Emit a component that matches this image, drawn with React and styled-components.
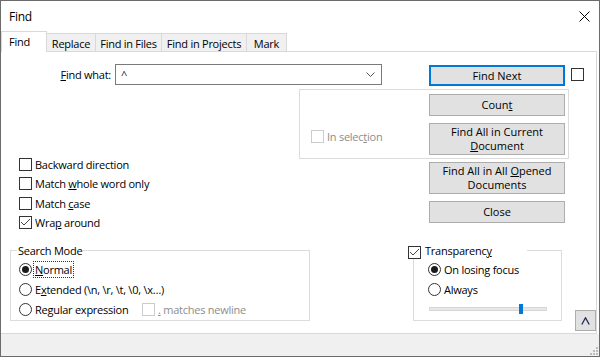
import React from 'react'
import styled, { createGlobalStyle } from 'styled-components'

const FONT = `"Open Sans", "Noto Sans", "Liberation Sans", sans-serif`

const GlobalStyle = createGlobalStyle`
  html, body { margin: 0; padding: 0; background: #ffffff; }
  body { font-family: ${FONT}; font-size: 11px; letter-spacing: -0.25px; color: #000; }
  * { box-sizing: border-box; }
`

const Window = styled.div`
  width: 600px;
  height: 357px;
  border: 1px solid #6b6b6b;
  background: #ffffff;
  display: flex;
  flex-direction: column;
  overflow: hidden;
`
const TitleBar = styled.div`
  height: 30px;
  flex: none;
  display: flex;
  align-items: center;
  justify-content: space-between;
  padding: 1px 9px 0 8px;
  font-size: 12px;
`
const TabStrip = styled.div`
  height: 20px;
  flex: none;
  display: flex;
  align-items: flex-end;
`
const Tab = styled.div`
  position: relative;
  z-index: ${p => (p.$active ? 1 : 0)};
  width: ${p => p.$w}px;
  height: ${p => (p.$active ? 21 : 18)}px;
  margin-bottom: ${p => (p.$active ? -1 : 0)}px;
  background: ${p => (p.$active ? '#ffffff' : '#f0f0f0')};
  border-top: 1px solid #d9d9d9;
  border-right: 1px solid #d9d9d9;
  border-left: ${p => (p.$active ? '1px solid #d9d9d9' : 'none')};
  display: flex;
  align-items: center;
  justify-content: ${p => (p.$active ? 'flex-start' : 'center')};
  padding: ${p => (p.$active ? '0 0 2px 7px' : '1px 0 0 0')};
  white-space: nowrap;
`
const Panel = styled.div`
  height: 283px;
  flex: none;
  margin-right: 2px;
  border-top: 1px solid #d9d9d9;
  border-right: 1px solid #d9d9d9;
  border-bottom: 1px solid #d9d9d9;
  display: flex;
  flex-direction: column;
`
const StatusStrip = styled.div`
  flex: 1;
  background: #f0f0f0;
  display: flex;
  align-items: flex-end;
  justify-content: flex-end;
  padding: 0 1px 1px 0;
`

const TopRow = styled.div`
  margin-top: 12px;
  height: 22px;
  display: flex;
  align-items: flex-start;
`
const FieldLabel = styled.div`
  width: 110px;
  height: 21px;
  display: flex;
  align-items: center;
  justify-content: flex-end;
`
const Combo = styled.div`
  margin-left: 4px;
  width: 267px;
  height: 21px;
  border: 1px solid #7a7a7a;
  display: flex;
  align-items: center;
  justify-content: space-between;
  padding: 0 6px 0 5px;
  color: #1a1a3a;
`
const Button = styled.div`
  width: 136px;
  height: ${p => p.$h || 22}px;
  margin: ${p => p.$m || '0'};
  flex: none;
  background: #e1e1e1;
  border: ${p => (p.$primary ? '2px solid #0078d7' : '1px solid #adadad')};
  display: flex;
  align-items: center;
  justify-content: center;
  text-align: center;
  line-height: 14px;
  letter-spacing: 0;
  padding: 0 12px;
`
const MiddleRow = styled.div`
  margin-top: 3px;
  height: 150px;
  display: flex;
`
const OptionsCol = styled.div`
  width: 298px;
  padding: 66px 0 0 18px;
`
const OptionRow = styled.div`
  height: ${p => p.$h || 19.25}px;
  display: flex;
  align-items: center;
  gap: 3px;
  color: ${p => (p.$disabled ? '#8d8d8d' : '#000')};
  white-space: nowrap;
`
const ActionsCol = styled.div`
  display: flex;
  flex-direction: column;
`
const SelectionGroup = styled.div`
  width: 270px;
  height: 70px;
  border: 1px solid #dcdcdc;
  display: flex;
  padding: 4px 0 0 11px;
`
const SelectionSide = styled.div`
  width: 118px;
  padding-top: 36px;
`
const ButtonStack = styled.div`
  display: flex;
  flex-direction: column;
  gap: 7px;
`
const BottomRow = styled.div`
  margin-top: 5px;
  height: 87px;
  display: flex;
  align-items: flex-start;
  padding-left: 9px;
`
const GroupWrap = styled.div`
  margin-left: ${p => p.$ml || 0}px;
  display: flex;
  flex-direction: column;
`
const Caption = styled.div`
  position: relative;
  z-index: 1;
  height: 13px;
  line-height: 13px;
  padding-left: ${p => p.$pl}px;
  display: flex;
`
const CaptionInner = styled.div`
  background: #ffffff;
  width: ${p => (p.$w ? `${p.$w}px` : 'auto')};
  padding: 0 1px;
  display: flex;
  align-items: flex-start;
  gap: 4px;
  white-space: nowrap;
`
const Frame = styled.div`
  margin: -7px 0 0 ${p => p.$ml || 0}px;
  width: ${p => p.$w}px;
  height: 71px;
  border: 1px solid #dcdcdc;
  padding: 9px 0 0 ${p => p.$pl}px;
`
const FocusText = styled.span`
  margin-left: -2px;
  padding: 1px 1px;
  border: 1px dotted #333;
  line-height: 13px;
`
const FixedLabel = styled.span`
  width: ${p => p.$w}px;
  flex: none;
`
const Slider = styled.div`
  margin: 4px 0 0 1px;
  width: 118px;
  height: 10px;
  display: flex;
  align-items: center;
  position: relative;
`
const Track = styled.div`
  width: 100%;
  height: 4px;
  background: #e7e7e7;
  border: 1px solid #d6d6d6;
`
const Thumb = styled.div`
  position: absolute;
  top: 0;
  width: 4px;
  height: 10px;
  background: #0078d7;
`
const CollapseButton = styled.div`
  align-self: flex-end;
  margin-left: 13px;
  width: 21px;
  height: 21px;
  background: #e1e1e1;
  border: 1px solid #adadad;
  display: flex;
  align-items: center;
  justify-content: center;
`

const BoxShell = styled.span`
  width: 13px;
  height: 13px;
  flex: none;
  margin-top: ${p => p.$mt || 0}px;
  border: 1px solid ${p => (p.$disabled ? '#cccccc' : '#333333')};
  background: #ffffff;
  display: inline-flex;
  align-items: center;
  justify-content: center;
`
const RadioShell = styled.span`
  width: 13px;
  height: 13px;
  flex: none;
  border-radius: 50%;
  border: 1px solid #333333;
  background: #ffffff;
  display: inline-flex;
  align-items: center;
  justify-content: center;
  &::after {
    content: '';
    width: 7px;
    height: 7px;
    border-radius: 50%;
    background: ${p => (p.$on ? '#1a1a1a' : 'transparent')};
  }
`

const CheckBox = ({ checked, disabled, mt }) => (
  <BoxShell $disabled={disabled} $mt={mt}>
    {checked && (
      <svg width="11" height="11" viewBox="0 0 11 11">
        <polyline points="1,5 4,8 10,2" fill="none" stroke="#444" strokeWidth="1" />
      </svg>
    )}
  </BoxShell>
)

const Option = ({ checked, children }) => (
  <OptionRow>
    <CheckBox checked={checked} />
    <span>{children}</span>
  </OptionRow>
)

const Radio = ({ on, children }) => (
  <OptionRow $h={19.75}>
    <RadioShell $on={on} />
    {children}
  </OptionRow>
)

const tabs = [
  { label: 'Find', w: 46, active: true },
  { label: 'Replace', w: 49 },
  { label: 'Find in Files', w: 66 },
  { label: 'Find in Projects', w: 85 },
  { label: 'Mark', w: 40 },
]

export default function App() {
  return (
    <>
      <GlobalStyle />
      <Window>
        <TitleBar>
          <span>Find</span>
          <svg width="11" height="11" viewBox="0 0 11 11">
            <path d="M0.5 0.5 L10.5 10.5 M10.5 0.5 L0.5 10.5" stroke="#000" strokeWidth="1" />
          </svg>
        </TitleBar>
        <TabStrip>
          {tabs.map(t => (
            <Tab key={t.label} $w={t.w} $active={t.active}>
              {t.label}
            </Tab>
          ))}
        </TabStrip>
        <Panel>
          <TopRow>
            <FieldLabel>
              <span><u>F</u>ind what:</span>
            </FieldLabel>
            <Combo>
              <span>^</span>
              <svg width="9" height="5" viewBox="0 0 9 5">
                <polyline points="0.5,0.5 4.5,4.5 8.5,0.5" fill="none" stroke="#555" strokeWidth="1" />
              </svg>
            </Combo>
            <Button $primary $h={21} $m="1px 0 0 47px">Find Next</Button>
            <BoxShell $mt={4} style={{ marginLeft: 6 }} />
          </TopRow>

          <MiddleRow>
            <OptionsCol>
              <Option>Backward direction</Option>
              <Option>Match <u>w</u>hole word only</Option>
              <Option>Match <u>c</u>ase</Option>
              <Option checked>Wra<u>p</u> around</Option>
            </OptionsCol>
            <ActionsCol>
              <SelectionGroup>
                <SelectionSide>
                  <OptionRow $h={13} $disabled>
                    <CheckBox disabled />
                    <span>In selec<u>t</u>ion</span>
                  </OptionRow>
                </SelectionSide>
                <ButtonStack>
                  <Button>Coun<u>t</u></Button>
                  <Button $h={32}>
                    <span>Find All in Current<br /><u>D</u>ocument</span>
                  </Button>
                </ButtonStack>
              </SelectionGroup>
              <Button $h={32} $m="3px 0 0 130px">
                <span>Find All in All <u>O</u>pened<br />Documents</span>
              </Button>
              <Button $m="7px 0 0 130px">Close</Button>
            </ActionsCol>
          </MiddleRow>

          <BottomRow>
            <GroupWrap>
              <Caption $pl={7}>
                <CaptionInner>Search Mode</CaptionInner>
              </Caption>
              <Frame $w={300} $pl={8}>
                <Radio on>
                  <FocusText><u>N</u>ormal</FocusText>
                </Radio>
                <Radio>
                  <span>E<u>x</u>tended (\n, \r, \t, \0, \x…)</span>
                </Radio>
                <Radio>
                  <FixedLabel $w={104}>Re<u>g</u>ular expression</FixedLabel>
                  <OptionRow $h={13} $disabled>
                    <CheckBox disabled />
                    <span><u>.</u> matches newline</span>
                  </OptionRow>
                </Radio>
              </Frame>
            </GroupWrap>

            <GroupWrap $ml={97}>
              <Caption $pl={0}>
                <CaptionInner $w={120}>
                  <CheckBox checked mt={2} />
                  <span>Transparenc<u>y</u></span>
                </CaptionInner>
              </Caption>
              <Frame $w={149} $pl={14} $ml={6}>
                <Radio on><span>On losing focus</span></Radio>
                <Radio><span>Always</span></Radio>
                <Slider>
                  <Track />
                  <Thumb style={{ left: `${(90 / 118) * 100}%` }} />
                </Slider>
              </Frame>
            </GroupWrap>

            <CollapseButton>
              <svg width="9" height="8" viewBox="0 0 9 8">
                <polyline points="0.8,7.5 4.5,0.8 8.2,7.5" fill="none" stroke="#1e2a5a" strokeWidth="1.3" />
              </svg>
            </CollapseButton>
          </BottomRow>
        </Panel>
        <StatusStrip>
          <svg width="8" height="8" viewBox="0 0 8 8">
            <rect x="6" y="0" width="2" height="2" fill="#bcbcbc" />
            <rect x="3" y="3" width="2" height="2" fill="#bcbcbc" />
            <rect x="6" y="3" width="2" height="2" fill="#bcbcbc" />
            <rect x="0" y="6" width="2" height="2" fill="#bcbcbc" />
            <rect x="3" y="6" width="2" height="2" fill="#bcbcbc" />
            <rect x="6" y="6" width="2" height="2" fill="#bcbcbc" />
          </svg>
        </StatusStrip>
      </Window>
    </>
  )
}
